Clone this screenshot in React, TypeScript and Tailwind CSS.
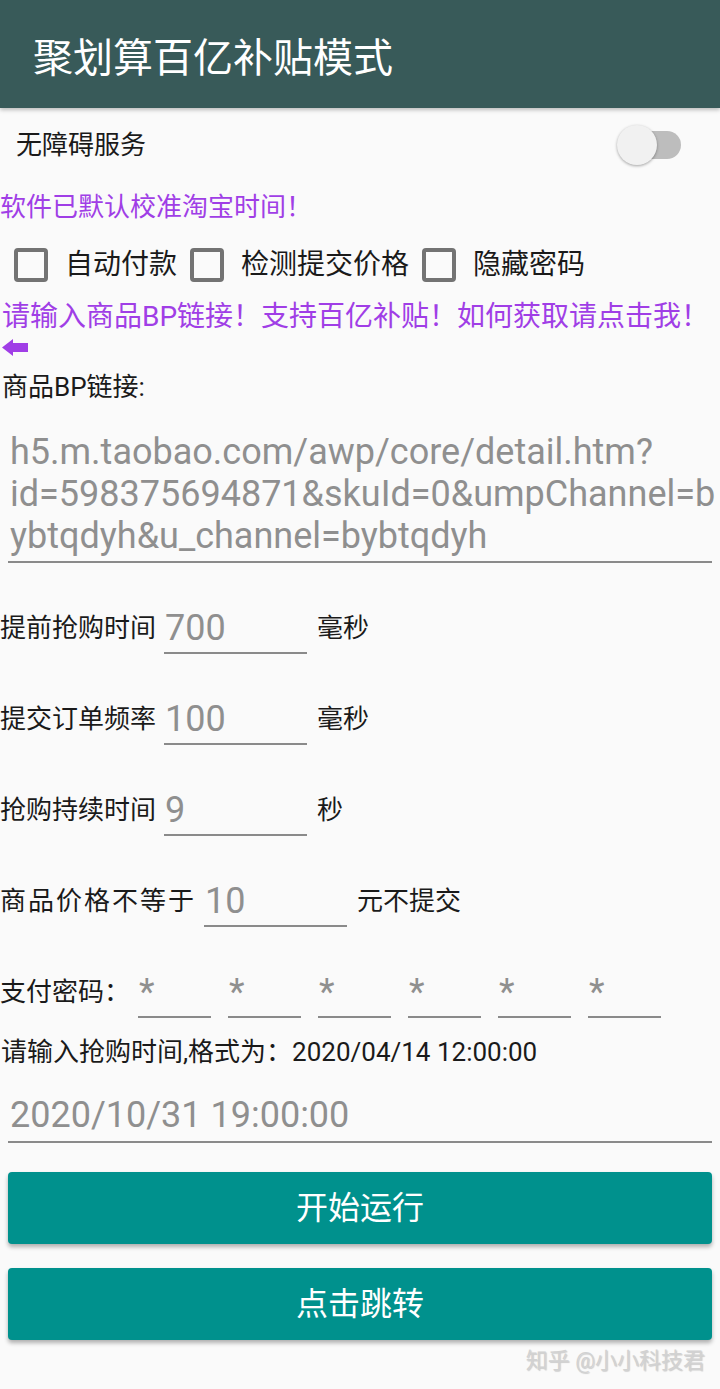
import { useState } from "react";

const FONT = "font-['Roboto','Noto_Sans_CJK_SC',sans-serif]";

const Field = ({ value, width }: { value: string; width: string }) => (
  <div className={`${width} border-b-2 border-[#8a8a8a] pb-[3px] pl-[1px] text-[36px] leading-[42px] text-[#8f8f8f]`}>
    {value}
  </div>
);

const TimingRow = ({
  label,
  value,
  unit,
  labelWidth = "w-[164px]",
  labelClass = "",
}: {
  label: string;
  value: string;
  unit: string;
  labelWidth?: string;
  labelClass?: string;
}) => (
  <div className="flex items-start mt-[44px]">
    <div className={`${labelWidth} h-[42px] flex items-center text-[26px] leading-none text-[#1a1a1a] ${labelClass}`}>
      {label}
    </div>
    <Field value={value} width="w-[143px]" />
    <div className="h-[42px] flex items-center pl-[10px] text-[26px] leading-none text-[#1a1a1a]">{unit}</div>
  </div>
);

const Check = ({ label, first = false }: { label: string; first?: boolean }) => (
  <label className={`flex items-center ${first ? "ml-[14px]" : "ml-[13px]"}`}>
    <span className="w-[34px] h-[34px] rounded-[4px] border-[4px] border-[#737373] shrink-0" />
    <span className="ml-[17px] text-[28px] leading-none text-[#1a1a1a]">{label}</span>
  </label>
);

export default function App() {
  const [enabled] = useState(false);
  const pins = ["*", "*", "*", "*", "*", "*"];

  return (
    <div className={`${FONT} w-[720px] h-[1389px] bg-[#fafafa] overflow-hidden`}>
      {/* toolbar */}
      <div className="h-[108px] bg-[#385a59] flex items-center pl-[33px] pt-[10px] shadow-[0_2px_4px_rgba(0,0,0,0.25)]">
        <h1 className="text-[40px] leading-none text-white">聚划算百亿补贴模式</h1>
      </div>

      {/* accessibility switch */}
      <div className="h-[74px] flex items-center justify-between pl-[16px] pr-[39px]">
        <span className="text-[26px] leading-none text-[#1a1a1a]">无障碍服务</span>
        <div className="relative w-[64px] h-[40px] flex items-center">
          <div className={`ml-[11px] w-[53px] h-[28px] rounded-full ${enabled ? "bg-[#80cbc4]" : "bg-[#bdbdbd]"}`} />
          <div className="absolute left-0 top-0 w-[40px] h-[40px] rounded-full bg-[#f1f1f1] shadow-[0_1px_3px_rgba(0,0,0,0.35)]" />
        </div>
      </div>

      <div className="h-[50px] flex items-center text-[26px] leading-none text-[#a03ee6]">软件已默认校准淘宝时间！</div>

      <div className="h-[66px] flex items-center">
        <Check label="自动付款" first />
        <Check label="检测提交价格" />
        <Check label="隐藏密码" />
      </div>

      <div className="h-[38px] flex items-center pl-[2px] text-[28px] leading-none text-[#a03ee6] whitespace-nowrap">
        请输入商品BP链接！支持百亿补贴！如何获取请点击我！
      </div>
      <div className="h-[22px] flex items-center pl-[2px]">
        <svg width="26" height="17" viewBox="0 0 26 17">
          <path d="M0 8.5 L11 0 L11 4 L26 4 L26 13 L11 13 L11 17 Z" fill="#a03ee6" />
        </svg>
      </div>

      <div className="h-[58px] flex items-center pl-[2px] text-[26px] leading-none text-[#1a1a1a]">商品BP链接:</div>

      {/* link input */}
      <div className="mx-[8px] pt-[15px] pb-[4px] pl-[2px] border-b-2 border-[#8a8a8a] text-[36px] leading-[42px] text-[#8f8f8f] whitespace-nowrap">
        <div>h5.m.taobao.com/awp/core/detail.htm?</div>
        <div>id=598375694871&amp;skuId=0&amp;umpChannel=b</div>
        <div>ybtqdyh&amp;u_channel=bybtqdyh</div>
      </div>

      <TimingRow label="提前抢购时间" value="700" unit="毫秒" />
      <TimingRow label="提交订单频率" value="100" unit="毫秒" />
      <TimingRow label="抢购持续时间" value="9" unit="秒" />
      <TimingRow label="商品价格不等于" value="10" unit="元不提交" labelWidth="w-[204px]" labelClass="tracking-[2px]" />

      {/* pay password */}
      <div className="flex items-start mt-[44px]">
        <div className="w-[138px] h-[42px] flex items-center text-[26px] leading-none text-[#1a1a1a]">支付密码：</div>
        <div className="flex gap-[17px]">
          {pins.map((p, i) => (
            <Field key={i} value={p} width="w-[73px]" />
          ))}
        </div>
      </div>

      <div className="mt-[19px] h-[30px] flex items-center pl-[1px] text-[26px] leading-none text-[#1a1a1a] whitespace-nowrap">
        请输入抢购时间,格式为：2020/04/14 12:00:00
      </div>

      <div className="mx-[8px] mt-[27px] pb-[5px] pl-[2px] border-b-2 border-[#8a8a8a] text-[36px] leading-[42px] text-[#8f8f8f]">
        2020/10/31 19:00:00
      </div>

      <div className="mx-[8px] mt-[29px] flex flex-col gap-[24px]">
        <button className="h-[72px] rounded-[4px] bg-[#00918d] text-white text-[32px] leading-none shadow-[0_3px_4px_rgba(0,0,0,0.3)]">
          开始运行
        </button>
        <button className="h-[72px] rounded-[4px] bg-[#00918d] text-white text-[32px] leading-none shadow-[0_3px_4px_rgba(0,0,0,0.3)]">
          点击跳转
        </button>
      </div>

      <div className="mt-[6px] pr-[15px] text-right text-[22px] leading-[30px] text-[#d2d2d2] [text-shadow:1px_1px_1px_rgba(0,0,0,0.18)]">
        知乎 @小小科技君
      </div>
    </div>
  );
}
